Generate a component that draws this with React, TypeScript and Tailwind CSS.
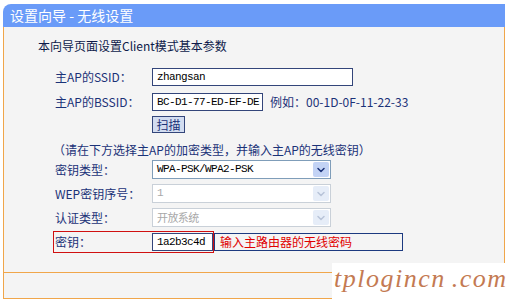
import { ChevronDown } from 'lucide-react'

const cjk = { fontFamily: '"Noto Sans CJK SC", "Liberation Sans", sans-serif' }
const mono = { fontFamily: '"Liberation Mono", "Noto Sans CJK SC", monospace' }

function Label({ text }: { text: string }) {
  return (
    <div className="w-[97px] shrink-0 text-[12px] leading-4 text-[#1b3278]" style={cjk}>
      {text}
    </div>
  )
}

function Select({ value, disabled }: { value: string; disabled?: boolean }) {
  return (
    <div
      className={`flex h-[19px] w-[179px] items-stretch border bg-white ${
        disabled ? 'border-[#c9d0d8]' : 'border-[#7f9db9]'
      }`}
    >
      <div
        className={`flex-1 pl-[4px] text-[11px] leading-[17px] tracking-[-0.6px] ${
          disabled ? 'text-[#a8a8a8]' : 'text-black'
        }`}
        style={disabled && value === '开放系统' ? cjk : mono}
      >
        {value}
      </div>
      <div
        className={`m-px flex w-[16px] items-center justify-center rounded-[2px] ${
          disabled ? 'bg-[#e6edf8] text-[#b8c4d8]' : 'bg-[#c3d3f5] text-[#1b3278]'
        }`}
      >
        <ChevronDown size={12} strokeWidth={3} />
      </div>
    </div>
  )
}

export default function App() {
  return (
    <div className="relative h-[302px] w-[507px] overflow-hidden bg-white">
      <div className="ml-[3px] mt-[4px] w-[502px]">
        <div
          className="flex h-[23px] items-center rounded-tl-[8px] bg-[#6a9bf8] pl-[7px] text-[14px] text-white"
          style={cjk}
        >
          设置向导 - 无线设置
        </div>

        <div className="h-[246px] border-x border-b border-[#f0a64a] bg-[#f4f4f4]">
          <div className="pl-[34px] pt-[11px] text-[12px] leading-4 text-[#0d1a4a]" style={cjk}>
            本向导页面设置Client模式基本参数
          </div>

          <div className="pl-[49px]">
            <div className="mt-[14px] flex h-[18px] items-center pl-[2px]">
              <Label text="主AP的SSID：" />
              <div
                className="h-[18px] w-[201px] border border-[#33457a] bg-white pl-[4px] text-[11px] leading-4 tracking-[-0.6px]"
                style={mono}
              >
                zhangsan
              </div>
            </div>

            <div className="mt-[7px] flex h-[18px] items-center pl-[2px]">
              <Label text="主AP的BSSID：" />
              <div
                className="h-[18px] w-[111px] border border-[#33457a] bg-white pl-[4px] text-[11px] leading-4 tracking-[-0.6px]"
                style={mono}
              >
                BC-D1-77-ED-EF-DE
              </div>
              <div className="ml-[7px] text-[12px] text-[#1b3278]" style={cjk}>
                例如：00-1D-0F-11-22-33
              </div>
            </div>

            <div className="mt-[5px] flex h-[17px] pl-[99px]">
              <div
                className="flex h-[17px] w-[33px] items-center justify-center border border-[#33457a] bg-[#d2dcf0] text-[12px] text-[#1b3278]"
                style={cjk}
              >
                扫描
              </div>
            </div>

            <div className="mt-[9px] h-4 text-[12px] leading-4 text-[#1b3278]" style={cjk}>
              （请在下方选择主AP的加密类型，并输入主AP的无线密钥）
            </div>

            <div className="mt-[2px] flex h-[19px] items-center pl-[2px]">
              <Label text="密钥类型：" />
              <Select value="WPA-PSK/WPA2-PSK" />
            </div>

            <div className="mt-[5px] flex h-[19px] items-center pl-[2px]">
              <Label text="WEP密钥序号：" />
              <Select value="1" disabled />
            </div>

            <div className="mt-[5px] flex h-[19px] items-center pl-[2px]">
              <Label text="认证类型：" />
              <Select value="开放系统" disabled />
            </div>

            <div className="mt-[4px] flex h-[22px] items-center">
              <div className="flex h-[22px] w-[161px] items-center border border-[#d01010] pl-[1px]">
                <Label text="密钥：" />
                <div
                  className="h-[18px] w-[61px] border border-[#33457a] bg-white pl-[4px] text-[11px] leading-4 tracking-[-0.6px]"
                  style={mono}
                >
                  1a2b3c4d
                </div>
              </div>
              <div
                className="flex h-[18px] w-[189px] items-center border border-[#1c3a80] pl-[5px] text-[12px] text-[#e00000]"
                style={cjk}
              >
                输入主路由器的无线密码
              </div>
            </div>
          </div>
        </div>

        <div className="h-[26px] border-x border-b border-[#f0a64a] bg-[#f4f4f4]" />
      </div>

      <div
        className="absolute left-[332px] top-[263px] flex h-[39px] w-[175px] items-start whitespace-nowrap bg-white pl-[2px] pt-[2px] text-[26px] italic leading-[28px] tracking-[1.5px] text-[#c47a52]"
        style={{ fontFamily: '"Liberation Serif", serif' }}
      >
        <span>tplogincn</span>
        <span className="ml-[6px]">.com</span>
      </div>
    </div>
  )
}
